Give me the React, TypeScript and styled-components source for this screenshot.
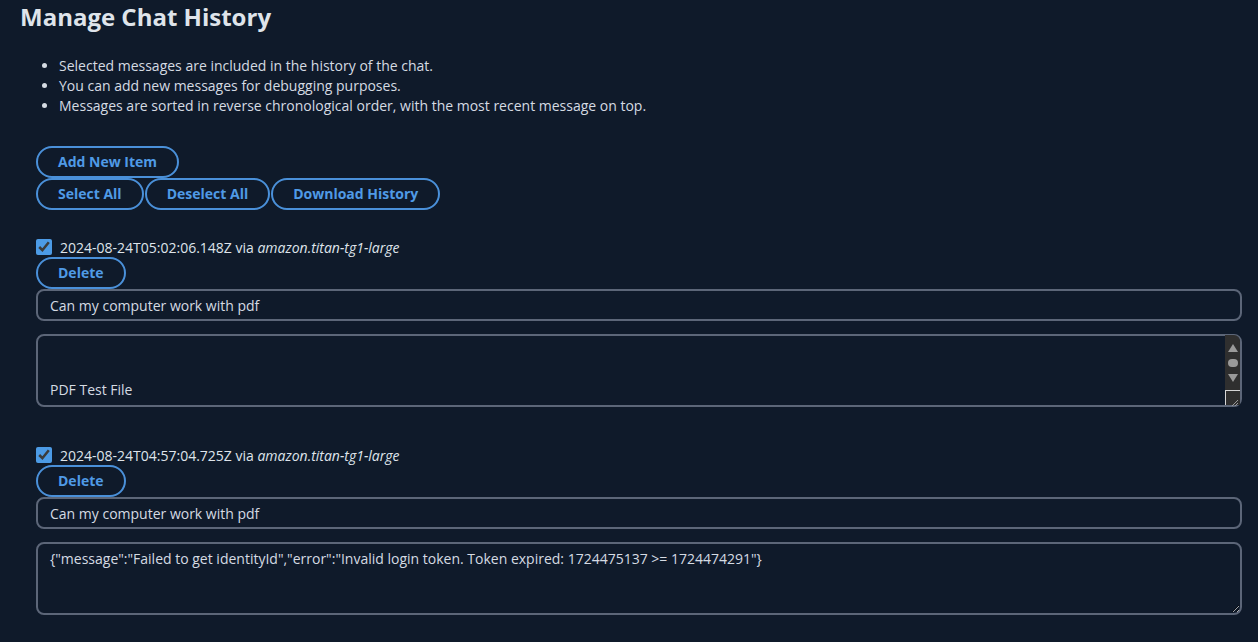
import React, { useEffect, useRef } from "react";
import styled, { createGlobalStyle } from "styled-components";

const Global = createGlobalStyle`
  html, body { margin: 0; padding: 0; background: #0f1a2a; }
  body { font-family: "Open Sans", "Noto Sans", sans-serif; color: #d5dbe3; }
  * { box-sizing: border-box; }
`;

const Page = styled.div`
  padding: 0 16px 20px 20px;
  width: 1258px;
  min-height: 642px;
  background: #0f1a2a;
`;

const Title = styled.h1`
  margin: 0;
  padding-top: 1px;
  font-size: 24px;
  line-height: 32px;
  font-weight: 700;
  color: #dfe4ea;
`;

const Notes = styled.ul`
  margin: 23px 0 0 0;
  padding-left: 39px;
  font-size: 14px;
  line-height: 20px;
  color: #d5dbe3;
`;

const Toolbar = styled.div`
  display: flex;
  flex-direction: column;
  align-items: flex-start;
  margin: 30px 0 0 16px;
`;

const ButtonRow = styled.div`
  display: flex;
`;

const PillButton = styled.button<{ $px?: number }>`
  font-family: "Open Sans", "Noto Sans", sans-serif;
  font-size: 14px;
  font-weight: 700;
  color: #4f9ae6;
  background: transparent;
  border: 2px solid #4a90d9;
  border-radius: 16px;
  height: 32px;
  padding: 0 ${(p) => p.$px ?? 20}px;
  cursor: pointer;
  line-height: 28px;
  margin-right: 1px;
`;

const Item = styled.section`
  margin: 27px 0 0 16px;
  display: flex;
  flex-direction: column;
  & + & { margin-top: 38px; }
`;

const Header = styled.label`
  display: flex;
  align-items: center;
  gap: 8px;
  height: 20px;
  font-size: 14px;
  color: #dfe4ea;
`;

const Check = styled.input`
  margin: 0;
  width: 16px;
  height: 16px;
  accent-color: #4c9be6;
  color-scheme: dark;
`;

const DeleteWrap = styled.div`
  display: flex;
  height: 32px;
`;

const TextInput = styled.input`
  font-family: "Open Sans", "Noto Sans", sans-serif;
  font-size: 14px;
  color: #d5dbe3;
  background: transparent;
  border: 2px solid #5c6678;
  border-radius: 8px;
  height: 32px;
  padding: 0 12px;
  width: 1206px;
  outline: none;
  margin: 0;
`;

const AreaBox = styled.div`
  position: relative;
  margin-top: 13px;
  width: 1206px;
  height: 73px;
`;

const TextArea = styled.textarea`
  display: block;
  font-family: "Open Sans", "Noto Sans", sans-serif;
  font-size: 14px;
  line-height: 20px;
  color: #d5dbe3;
  background: transparent;
  border: 2px solid #5c6678;
  border-radius: 8px;
  height: 73px;
  padding: 5px 12px;
  width: 1206px;
  margin: 0;
  color-scheme: dark;
  outline: none;
  resize: vertical;
`;

const ScrollBar = styled.div`
  position: absolute;
  top: 1px;
  right: 2px;
  bottom: 2px;
  width: 15px;
  background: #2f2f2f;
  border-top-right-radius: 6px;
  display: flex;
  flex-direction: column;
  align-items: center;
`;

const Arrow = styled.div<{ $down?: boolean }>`
  width: 0;
  height: 0;
  border-left: 5px solid transparent;
  border-right: 5px solid transparent;
  ${(p) =>
    p.$down ? "border-top: 8px solid #9a9a9a;" : "border-bottom: 8px solid #9a9a9a;"}
`;

const Thumb = styled.div`
  width: 10px;
  height: 8px;
  border-radius: 4px;
  background: #9a9a9a;
`;

const Track = styled.div`
  display: flex;
  flex-direction: column;
  align-items: center;
  gap: 7px;
  padding-top: 9px;
  flex: 1;
`;

const Corner = styled.div`
  width: 15px;
  height: 15px;
  border-left: 1px solid #d6d6d6;
  border-top: 1px solid #d6d6d6;
  background: #2f2f2f;
  border-bottom-right-radius: 6px;
`;

type Msg = { time: string; model: string; prompt: string; response: string; scroll?: boolean };

const messages: Msg[] = [
  {
    time: "2024-08-24T05:02:06.148Z",
    model: "amazon.titan-tg1-large",
    prompt: "Can my computer work with pdf",
    response: "\n\n\n\nPDF Test File",
    scroll: true,
  },
  {
    time: "2024-08-24T04:57:04.725Z",
    model: "amazon.titan-tg1-large",
    prompt: "Can my computer work with pdf",
    response:
      '{"message":"Failed to get identityId","error":"Invalid login token. Token expired: 1724475137 >= 1724474291"}',
  },
];

function HistoryItem({ m }: { m: Msg }) {
  const ref = useRef<HTMLTextAreaElement>(null);
  useEffect(() => {
    if (ref.current) ref.current.scrollTop = ref.current.scrollHeight;
  }, []);
  return (
    <Item>
      <Header>
        <Check type="checkbox" defaultChecked />
        <span>
          {m.time} via <em>{m.model}</em>
        </span>
      </Header>
      <DeleteWrap>
        <PillButton $px={20}>Delete</PillButton>
      </DeleteWrap>
      <TextInput defaultValue={m.prompt} />
      <AreaBox>
        <TextArea ref={ref} defaultValue={m.response} />
        {m.scroll && (
          <ScrollBar>
            <Track>
              <Arrow />
              <Thumb />
              <Arrow $down />
            </Track>
            <Corner>
              <svg width="14" height="14" viewBox="0 0 14 14">
                <path d="M12 6 L6 12 M12 9 L9 12" stroke="#9a9a9a" strokeWidth="1" />
              </svg>
            </Corner>
          </ScrollBar>
        )}
      </AreaBox>
    </Item>
  );
}

export default function App() {
  return (
    <Page>
      <Global />
      <Title>Manage Chat History</Title>
      <Notes>
        <li>Selected messages are included in the history of the chat.</li>
        <li>You can add new messages for debugging purposes.</li>
        <li>Messages are sorted in reverse chronological order, with the most recent message on top.</li>
      </Notes>
      <Toolbar>
        <ButtonRow>
          <PillButton>Add New Item</PillButton>
        </ButtonRow>
        <ButtonRow>
          <PillButton>Select All</PillButton>
          <PillButton>Deselect All</PillButton>
          <PillButton>Download History</PillButton>
        </ButtonRow>
      </Toolbar>
      {messages.map((m) => (
        <HistoryItem key={m.time} m={m} />
      ))}
    </Page>
  );
}
